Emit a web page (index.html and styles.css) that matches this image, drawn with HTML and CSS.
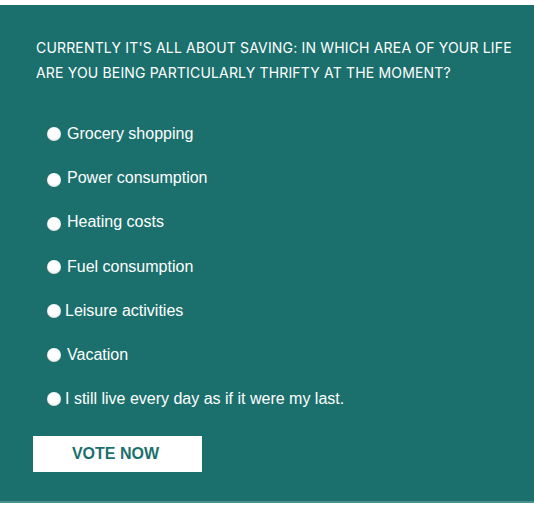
FILE: index.html
```html
<!DOCTYPE html>
<html lang="en">
<head>
<meta charset="utf-8">
<title>Poll</title>
<link rel="stylesheet" href="styles.css">
</head>
<body>
<div class="panel">
  <h2 class="question">Currently it's all about saving: in which area of your life are you being particularly thrifty at the moment?</h2>
  <ul class="options">
    <li class="option"><span class="radio"></span><span class="label">Grocery shopping</span></li>
    <li class="option"><span class="radio low"></span><span class="label">Power consumption</span></li>
    <li class="option"><span class="radio low"></span><span class="label">Heating costs</span></li>
    <li class="option"><span class="radio"></span><span class="label">Fuel consumption</span></li>
    <li class="option tight"><span class="radio"></span><span class="label">Leisure activities</span></li>
    <li class="option"><span class="radio"></span><span class="label">Vacation</span></li>
    <li class="option tight"><span class="radio"></span><span class="label">I still live every day as if it were my last.</span></li>
  </ul>
  <button class="vote">VOTE NOW</button>
</div>
</body>
</html>
```
FILE: styles.css
```css
html, body {
  margin: 0;
  padding: 0;
  background: #ffffff;
}
body {
  padding-top: 5px;
}
.panel {
  background: #1b706d;
  height: 498px;
  box-sizing: border-box;
  padding: 30px 0 0 0;
  border-bottom: 2px solid #4b918e;
  display: flex;
  flex-direction: column;
}
.question {
  margin: 0 0 0 36px;
  font-family: Inter, "Open Sans", sans-serif;
  font-weight: 400;
  font-size: 14px;
  letter-spacing: 0.17px;
  line-height: 25px;
  text-transform: uppercase;
  color: #ffffff;
  width: 495px;
}
.options {
  list-style: none;
  margin: 27px 0 0 0;
  padding: 0 0 0 47px;
  display: flex;
  flex-direction: column;
}
.option {
  height: 44.2px;
  display: flex;
  align-items: center;
  gap: 6px;
  font-family: "Liberation Sans", Arial, sans-serif;
  font-size: 16px;
  color: #ffffff;
}
.option.tight {
  gap: 4px;
}
.radio {
  width: 14px;
  height: 14px;
  border-radius: 50%;
  background: #ffffff;
  box-shadow: inset 0 -1px 2px rgba(0,0,0,0.15);
  flex: none;
}
.radio.low {
  margin-top: 3px;
}
.vote {
  margin: 15px 0 0 33px;
  width: 169px;
  height: 36px;
  border: none;
  background: #ffffff;
  color: #1b706d;
  font-family: "Liberation Sans", Arial, sans-serif;
  font-weight: 700;
  font-size: 16px;
  padding: 0 4px 0 0;
  text-align: center;
}
```
